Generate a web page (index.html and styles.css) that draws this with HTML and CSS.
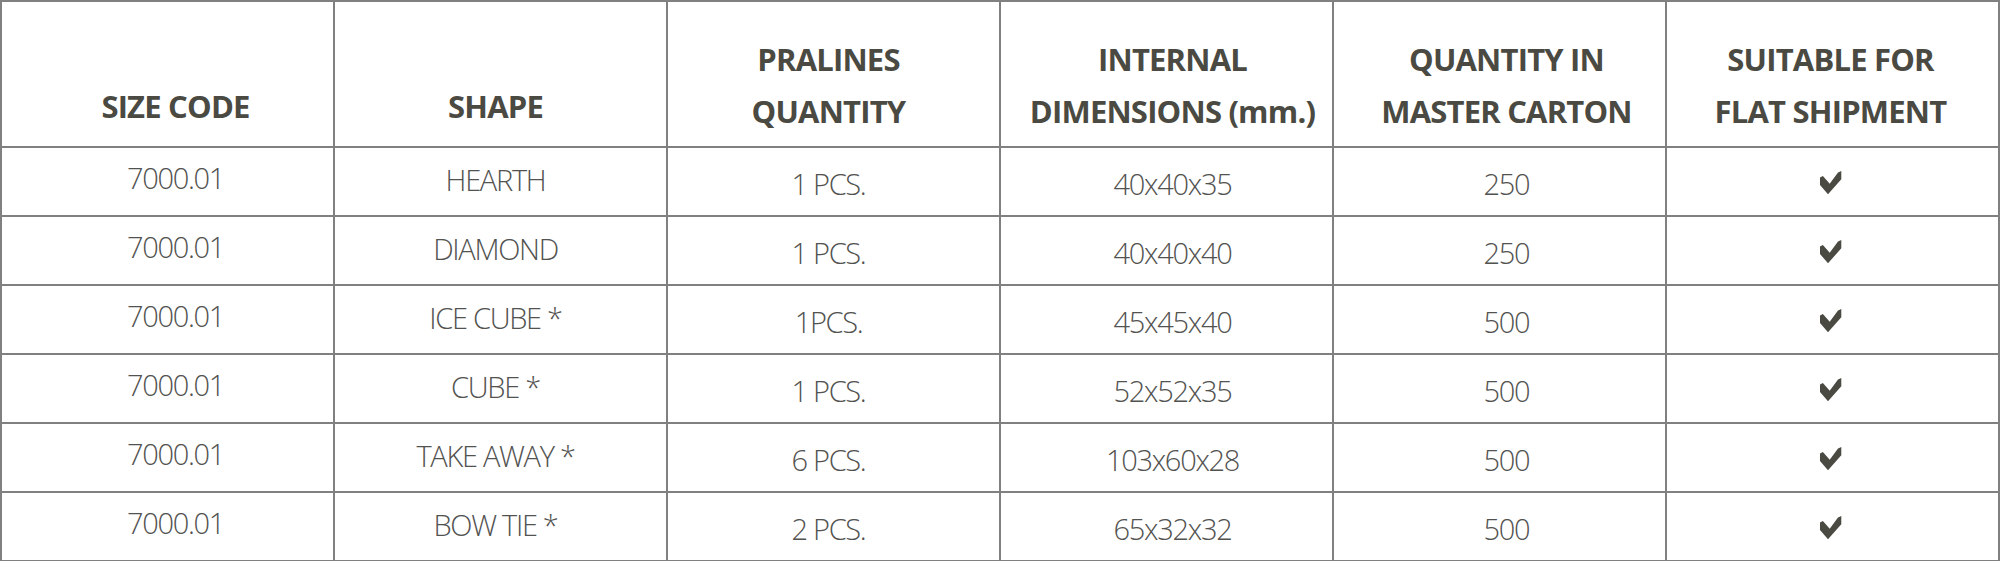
FILE: index.html
```html
<!DOCTYPE html>
<html lang="en">
<head>
<meta charset="utf-8">
<title>Sizes</title>
<link rel="stylesheet" href="styles.css">
</head>
<body>
<table class="spec">
  <thead>
    <tr>
      <th>SIZE CODE</th>
      <th>SHAPE</th>
      <th>PRALINES<br>QUANTITY</th>
      <th>INTERNAL<br>DIMENSIONS (mm.)</th>
      <th>QUANTITY IN<br>MASTER CARTON</th>
      <th>SUITABLE FOR<br>FLAT SHIPMENT</th>
    </tr>
  </thead>
  <tbody>
    <tr>
      <td>7000.01</td><td>HEARTH</td><td>1 PCS.</td><td>40x40x35</td><td>250</td>
      <td><svg class="check" viewBox="0 0 22 24" width="22" height="24"><polygon points="0,6.6 2.9,5 9.7,12.7 18,1.6 21.3,0 21.3,8.3 8,23.3 0,14"/></svg></td>
    </tr>
    <tr>
      <td>7000.01</td><td>DIAMOND</td><td>1 PCS.</td><td>40x40x40</td><td>250</td>
      <td><svg class="check" viewBox="0 0 22 24" width="22" height="24"><polygon points="0,6.6 2.9,5 9.7,12.7 18,1.6 21.3,0 21.3,8.3 8,23.3 0,14"/></svg></td>
    </tr>
    <tr>
      <td>7000.01</td><td>ICE CUBE *</td><td>1PCS.</td><td>45x45x40</td><td>500</td>
      <td><svg class="check" viewBox="0 0 22 24" width="22" height="24"><polygon points="0,6.6 2.9,5 9.7,12.7 18,1.6 21.3,0 21.3,8.3 8,23.3 0,14"/></svg></td>
    </tr>
    <tr>
      <td>7000.01</td><td>CUBE *</td><td>1 PCS.</td><td>52x52x35</td><td>500</td>
      <td><svg class="check" viewBox="0 0 22 24" width="22" height="24"><polygon points="0,6.6 2.9,5 9.7,12.7 18,1.6 21.3,0 21.3,8.3 8,23.3 0,14"/></svg></td>
    </tr>
    <tr>
      <td>7000.01</td><td>TAKE AWAY *</td><td>6 PCS.</td><td>103x60x28</td><td>500</td>
      <td><svg class="check" viewBox="0 0 22 24" width="22" height="24"><polygon points="0,6.6 2.9,5 9.7,12.7 18,1.6 21.3,0 21.3,8.3 8,23.3 0,14"/></svg></td>
    </tr>
    <tr>
      <td>7000.01</td><td>BOW TIE *</td><td>2 PCS.</td><td>65x32x32</td><td>500</td>
      <td><svg class="check" viewBox="0 0 22 24" width="22" height="24"><polygon points="0,6.6 2.9,5 9.7,12.7 18,1.6 21.3,0 21.3,8.3 8,23.3 0,14"/></svg></td>
    </tr>
  </tbody>
</table>
</body>
</html>
```

FILE: styles.css
```css
html, body {
  margin: 0;
  padding: 0;
  background: #ffffff;
}

.spec {
  width: 2000px;
  table-layout: fixed;
  border-collapse: collapse;
  font-family: "Open Sans", "Noto Sans", sans-serif;
}

.spec th,
.spec td {
  border: 2px solid #808080;
  text-align: center;
  padding: 0;
}

.spec thead tr {
  height: 146px;
}

.spec th {
  vertical-align: bottom;
  font-weight: 700;
  font-size: 31px;
  line-height: 52px;
  letter-spacing: -0.8px;
  color: #4a4a43;
  padding-bottom: 9px;
  white-space: nowrap;
}

.spec tbody tr {
  height: 69px;
}

.spec td {
  vertical-align: middle;
  font-weight: 300;
  font-size: 29px;
  line-height: 36px;
  letter-spacing: -1.3px;
  color: #525250;
}

.check {
  display: inline-block;
  vertical-align: middle;
  fill: #4a4a43;
}

/* column-specific centring */
.spec th:nth-child(1), .spec td:nth-child(1) { padding-left: 16px; }
.spec th:nth-child(2), .spec td:nth-child(2) { padding-right: 10px; }
.spec th:nth-child(3), .spec td:nth-child(3) { padding-right: 10px; }
.spec th:nth-child(4), .spec td:nth-child(4) { padding-left: 12px; }
.spec th:nth-child(5), .spec td:nth-child(5) { padding-left: 14px; }
.spec th:nth-child(6), .spec td:nth-child(6) { padding-right: 4px; }

/* single-line headings sit a little higher */
.spec th:nth-child(1), .spec th:nth-child(2) { padding-bottom: 14px; }

.spec td:nth-child(1) { padding-bottom: 7px; }
.spec td:nth-child(2) { padding-bottom: 3px; }
.spec td:nth-child(3) { padding-top: 4px; }
.spec td:nth-child(4) { padding-top: 4px; }
.spec td:nth-child(5) { padding-top: 4px; }
.spec td:nth-child(6) { padding-bottom: 4px; }
```
